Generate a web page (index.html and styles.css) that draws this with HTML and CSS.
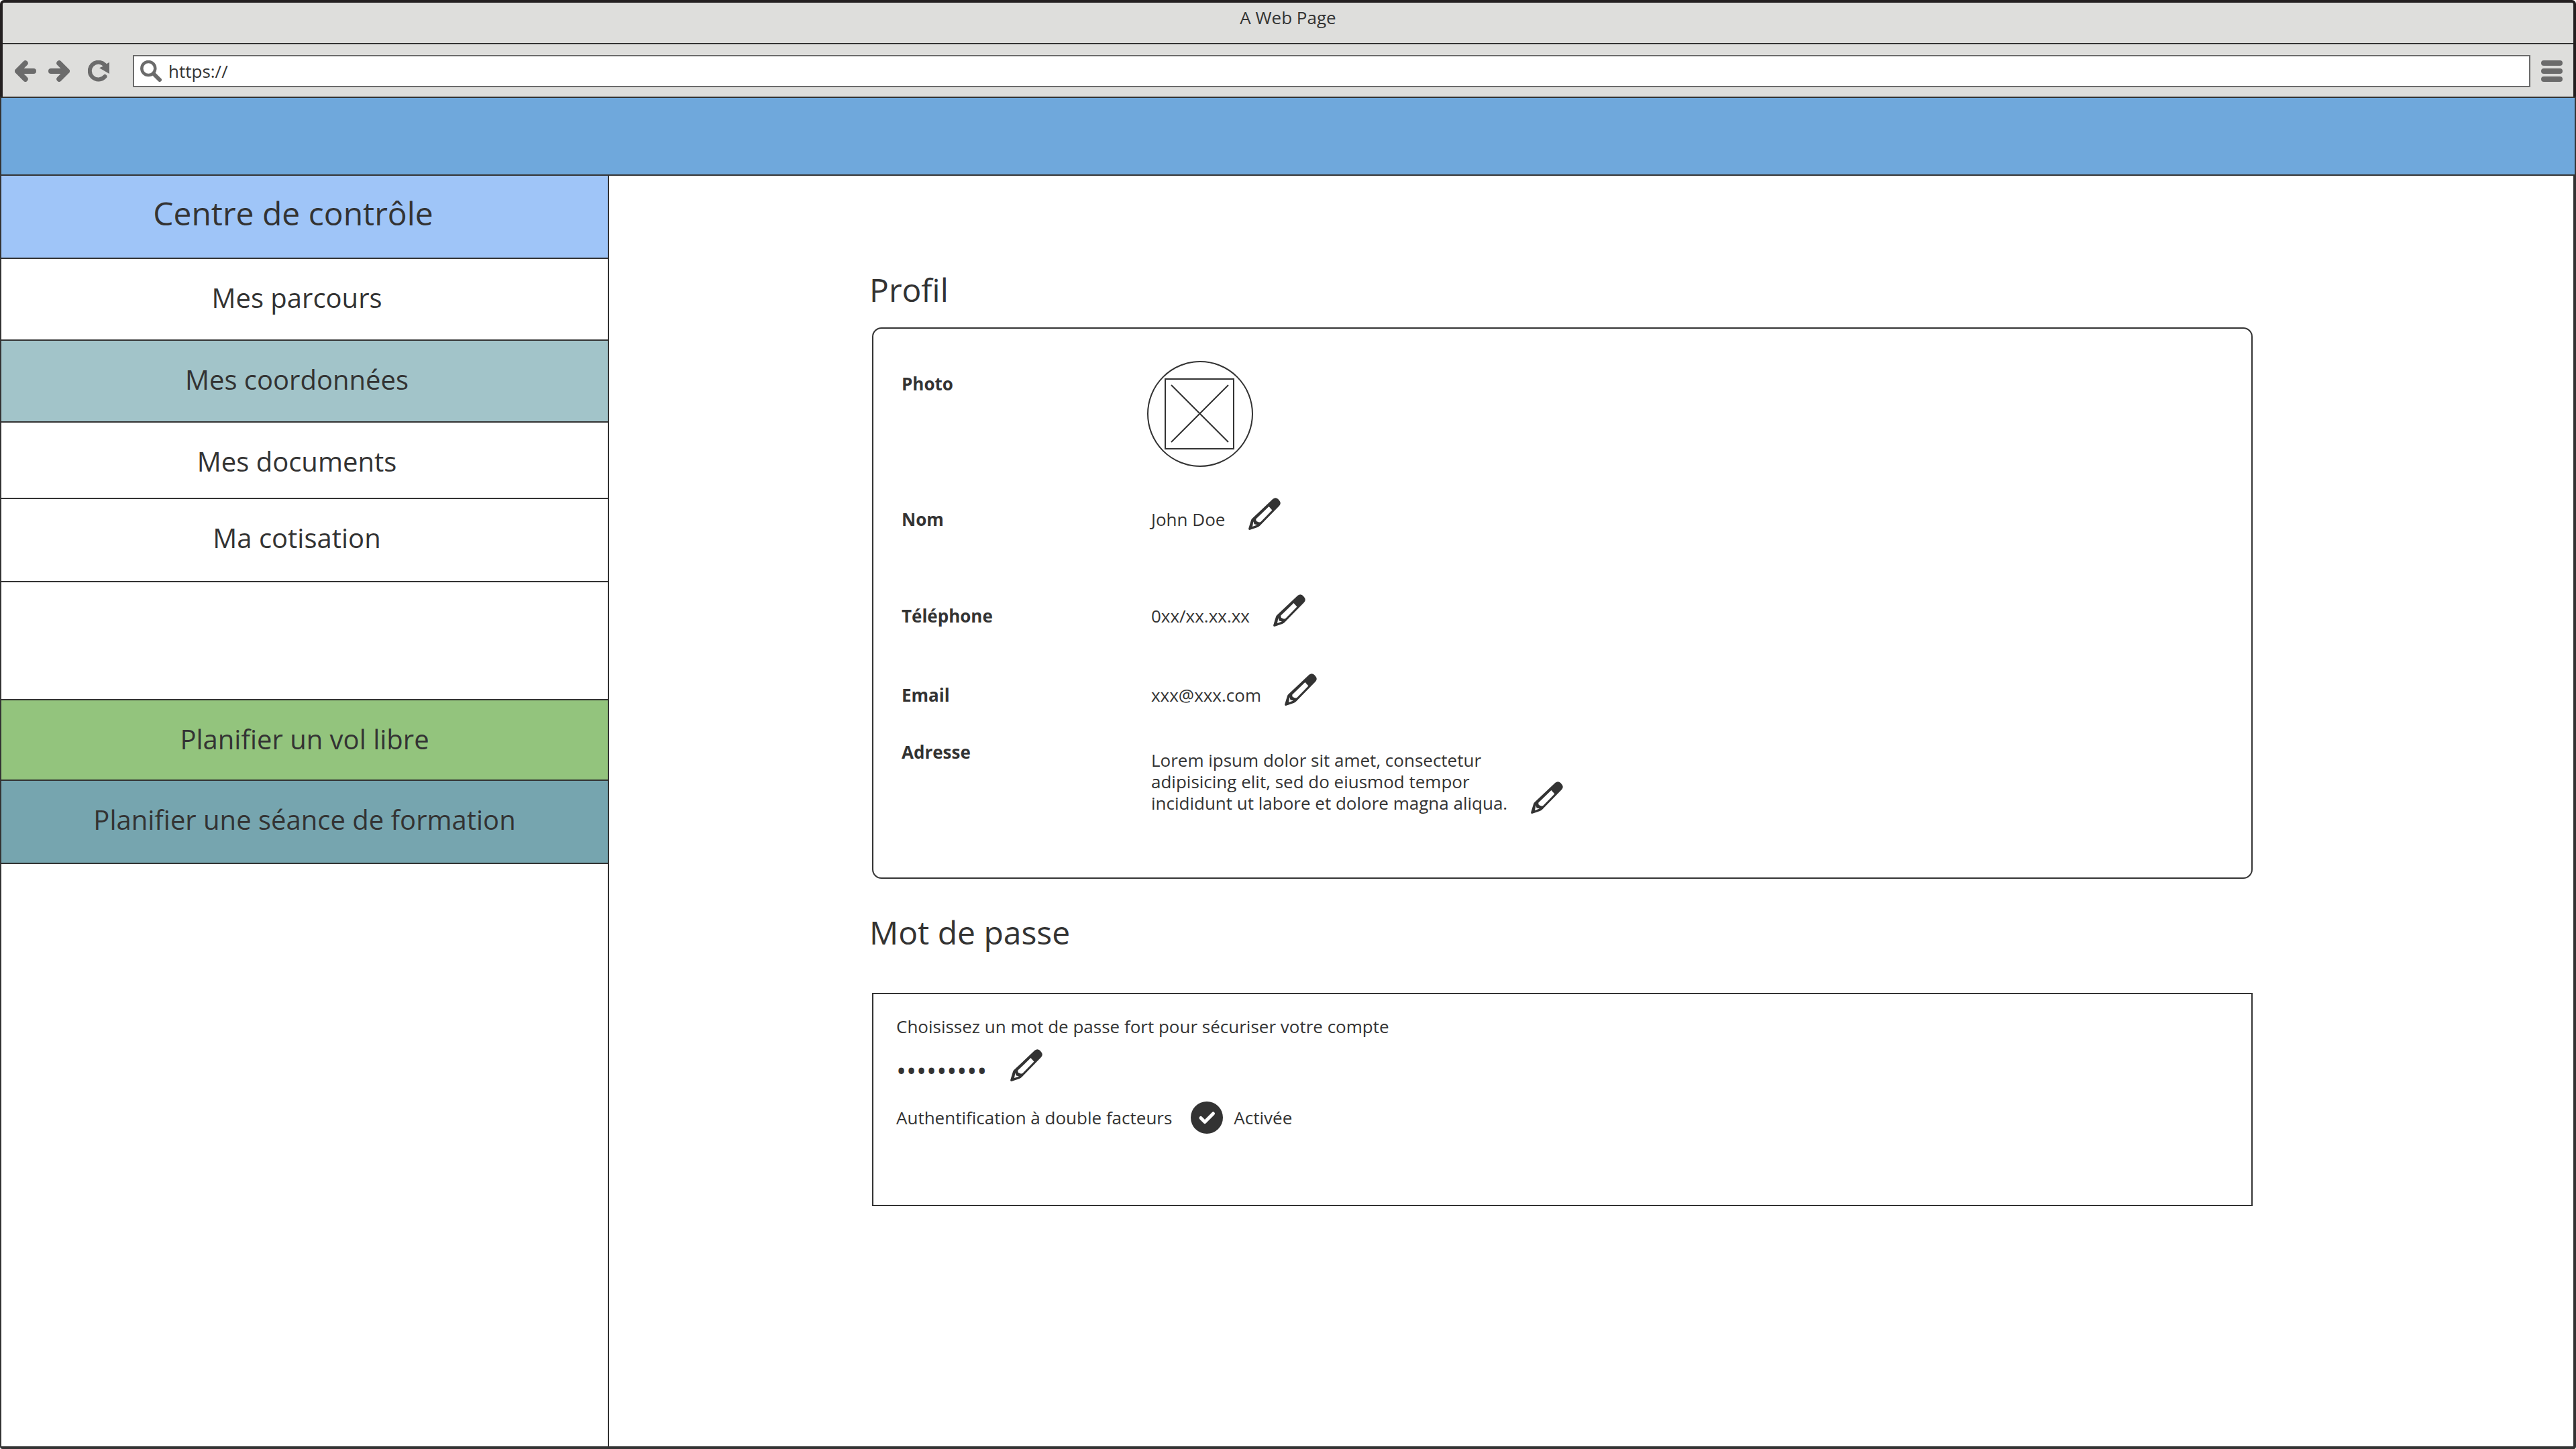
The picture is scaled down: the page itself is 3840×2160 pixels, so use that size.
FILE: index.html
```html
<!DOCTYPE html>
<html lang="fr">
<head>
  <meta charset="utf-8">
  <meta name="viewport" content="width=device-width, initial-scale=1">
  <title>A Web Page</title>
  <link rel="stylesheet" href="styles.css">
</head>
<body class="window">
  <svg class="sprite" aria-hidden="true">
    <symbol id="pencil" viewBox="0 0 48 48">
      <path fill="currentColor" fill-rule="evenodd" d="M36.500 1.800Q40.500-1.400 44 1.800L46 4Q49.500 8 46 12L17 41.800Q15.500 43.200 13.500 44L2.500 47.800Q-.4 48.400.3 45.500L3.800 34Q4.300 32 6 30.600ZM30.500 13L11.400 31.600Q11 33 12 35L15 36.200Q17.500 36.800 18.800 35.400L35.400 18.400ZM7.400 35.200L6 43L13 40.400L8.600 39.200Z"/>
    </symbol>
  </svg>

  <header class="chrome">
    <div class="chrome-title">A Web Page</div>
    <div class="toolbar">
      <div class="toolbar-nav">
        <button class="tool" type="button" aria-label="Précédent">
          <svg viewBox="0 0 32 32"><path d="M28 16H6M15.700 4.200L4 16L15.700 27.800" stroke-width="8"/></svg>
        </button>
        <button class="tool" type="button" aria-label="Suivant">
          <svg viewBox="0 0 32 32"><path d="M4 16H26M16.300 4.200L28 16L16.300 27.800" stroke-width="8"/></svg>
        </button>
        <button class="tool tool-reload" type="button" aria-label="Actualiser">
          <svg viewBox="0 0 32 32"><path d="M25.500 24A12.900 12.900 0 1 1 25 6.700" stroke-width="6"/><path class="solid" d="M32 2.700V20L17 11.300L21 9.500Z"/></svg>
        </button>
      </div>
      <label class="address">
        <svg class="address-icon" viewBox="0 0 32 32" aria-hidden="true"><circle cx="12.300" cy="12" r="10" stroke-width="4.500"/><path d="M20 20L29 29" stroke-width="6"/></svg>
        <input class="address-input" type="text" value="https://" aria-label="Adresse du site">
      </label>
      <button class="tool" type="button" aria-label="Menu">
        <svg viewBox="0 0 32 32"><path d="M4 4H28M4 16H28M4 28H28" stroke-width="8"/></svg>
      </button>
    </div>
  </header>

  <div class="banner"></div>

  <div class="layout">
    <nav class="sidebar">
      <a class="nav-item nav-title" href="#">Centre de contrôle</a>
      <a class="nav-item" href="#">Mes parcours</a>
      <a class="nav-item nav-current" href="#" aria-current="page">Mes coordonnées</a>
      <a class="nav-item" href="#">Mes documents</a>
      <a class="nav-item" href="#">Ma cotisation</a>
      <div class="nav-space"></div>
      <a class="nav-item nav-plan nav-flight" href="#">Planifier un vol libre</a>
      <a class="nav-item nav-plan nav-training" href="#">Planifier une séance de formation</a>
    </nav>

    <main class="content">
      <section class="section">
        <h2 class="heading">Profil</h2>
        <dl class="panel profile">
          <div class="field">
            <dt class="label label-photo">Photo</dt>
            <dd class="value">
              <svg class="avatar" viewBox="0 0 158 158" role="img" aria-label="Photo de profil"><circle cx="79" cy="79" r="78"/><path d="M27 27H129V131H27ZM36 36L121 121M121 36L36 121"/></svg>
            </dd>
          </div>
          <div class="field">
            <dt class="label label-row">Nom</dt>
            <dd class="value value-text"><span>John Doe</span>
              <button class="edit" type="button" aria-label="Modifier le nom"><svg><use href="#pencil"/></svg></button></dd>
          </div>
          <div class="field">
            <dt class="label label-row">Téléphone</dt>
            <dd class="value value-text"><span>0xx/xx.xx.xx</span>
              <button class="edit" type="button" aria-label="Modifier le téléphone"><svg><use href="#pencil"/></svg></button></dd>
          </div>
          <div class="field">
            <dt class="label label-row">Email</dt>
            <dd class="value value-text"><span>xxx@xxx.com</span>
              <button class="edit" type="button" aria-label="Modifier l’email"><svg><use href="#pencil"/></svg></button></dd>
          </div>
          <div class="field">
            <dt class="label">Adresse</dt>
            <dd class="value value-text value-address"><span>Lorem ipsum dolor sit amet, consectetur<br>adipisicing elit, sed do eiusmod tempor<br>incididunt ut labore et dolore magna aliqua.</span>
              <button class="edit" type="button" aria-label="Modifier l’adresse"><svg><use href="#pencil"/></svg></button></dd>
          </div>
        </dl>
      </section>

      <section class="section">
        <h2 class="heading heading-password">Mot de passe</h2>
        <div class="panel password">
          <label for="password">Choisissez un mot de passe fort pour sécuriser votre compte</label>
          <div class="password-row">
            <input class="password-input" id="password" type="password" value="motpasse1" readonly>
            <button class="edit" type="button" aria-label="Modifier le mot de passe"><svg><use href="#pencil"/></svg></button>
          </div>
          <div class="factor-row">
            <label for="factor">Authentification à double facteurs</label>
            <span class="check">
              <input class="check-input" id="factor" type="checkbox" checked>
              <svg class="check-mark" viewBox="0 0 48 48" aria-hidden="true"><path d="M15 24.500L21 30.500L33.500 18"/></svg>
            </span>
            <span class="factor-state">Activée</span>
          </div>
        </div>
      </section>
    </main>
  </div>
</body>
</html>
```
FILE: styles.css
```css
* {
  box-sizing: border-box;
}

.window {
  display: flex;
  flex-direction: column;
  min-height: 100vh;
  margin: 0;
  background: #fff;
  color: #333;
  font-family: "Open Sans", "Noto Sans", sans-serif;
  font-size: 26px;
  line-height: 32px;
}

.sprite {
  display: none;
}

button,
input {
  margin: 0;
  padding: 0;
  border: 0;
  background: none;
  color: inherit;
  font: inherit;
}

svg {
  display: block;
}

/* Browser frame */
.chrome {
  border: 4px solid #231f20;
  border-bottom: 0;
  border-radius: 6px 6px 0 0;
  background: #dededc;
}

.chrome-title {
  height: 62px;
  padding-top: 6px;
  border-bottom: 2px solid #333;
  text-align: center;
}

.toolbar {
  display: flex;
  align-items: center;
  gap: 16px;
  padding: 16px 16px 14px 18px;
}

.toolbar-nav {
  display: flex;
  gap: 18px;
  padding-right: 19px;
}

.tool {
  width: 32px;
  height: 32px;
}

.tool-reload {
  margin-left: 9px;
}

.tool svg,
.address-icon {
  width: 32px;
  height: 32px;
  fill: none;
  stroke: #6b6b6b;
  stroke-linecap: round;
  stroke-linejoin: round;
}

.tool .solid {
  fill: #6b6b6b;
  stroke: none;
}

.address {
  display: flex;
  flex: 1;
  align-items: center;
  gap: 10px;
  height: 48px;
  padding: 0 9px;
  border: 2px solid #6b6b6b;
  background: #fff;
}

.address-input {
  flex: 1;
  outline: 0;
}

.banner {
  height: 118px;
  border: 2px solid #333;
  background: #6fa8dc;
}

/* Page body */
.layout {
  display: flex;
  flex: 1;
  border: solid #333;
  border-width: 0 4px 4px 2px;
  border-radius: 0 0 4px 4px;
}

.sidebar {
  display: grid;
  flex: none;
  grid-template-rows: 124px 122px 122px 114px 124px 176px 120px 124px;
  align-content: start;
  width: 906px;
  border-right: 2px solid #333;
}

.nav-item {
  padding: 31px 23px 0 0;
  border-bottom: 2px solid #333;
  color: inherit;
  font-size: 40px;
  line-height: 54px;
  text-align: center;
  text-decoration: none;
}

.nav-title {
  padding: 24px 34px 0 0;
  background: #9fc5f8;
  font-size: 48px;
  line-height: 64px;
}

.nav-current {
  background: #a2c4c9;
}

.nav-space {
  border-bottom: 2px solid #333;
}

.nav-plan {
  padding-right: 0;
}

.nav-flight {
  background: #93c47d;
}

.nav-training {
  background: #76a5af;
}

.content {
  flex: 1;
  padding: 138px 478px 138px 388px;
}

.section + .section {
  margin-top: 48px;
}

.heading {
  margin: 0 0 24px;
  font-size: 48px;
  font-weight: 400;
  line-height: 64px;
}

.heading-password {
  margin-bottom: 58px;
}

.panel {
  margin: 0 0 0 4px;
  border: 2px solid #333;
}

/* Profile */
.profile {
  display: grid;
  grid-template-rows: 204px 144px 118px 101px auto;
  padding: 48px 42px 95px;
  border-radius: 14px;
}

.field {
  display: grid;
  grid-template-columns: 366px 1fr;
  align-items: start;
}

.label {
  font-weight: 700;
}

.label-photo {
  padding-top: 18px;
}

.label-row {
  padding-top: 16px;
}

.value {
  margin: 0;
}

.value-text {
  display: flex;
  align-items: flex-end;
  gap: 35px;
  padding-left: 6px;
}

.value-address {
  padding-top: 12px;
}

.avatar {
  width: 158px;
  height: 158px;
  fill: none;
  stroke: #333;
  stroke-width: 2px;
}

.edit,
.edit svg {
  width: 48px;
  height: 48px;
}

/* Password */
.password {
  display: flex;
  flex-direction: column;
  align-items: flex-start;
  padding: 32px 34px 106px;
}

.password-row {
  display: flex;
  align-items: center;
  gap: 34px;
  margin-top: 18px;
}

.password-input {
  width: 136px;
  height: 48px;
  padding-top: 14px;
  outline: 0;
  font-size: 40px;
}

.factor-row {
  display: flex;
  align-items: center;
  margin-top: 30px;
}

.check {
  display: grid;
  margin: 0 16px 0 28px;
}

.check-input,
.check-mark {
  grid-area: 1 / 1;
  width: 48px;
  height: 48px;
}

.check-input {
  border-radius: 50%;
  appearance: none;
}

.check-input:checked {
  background: #333;
}

.check-mark {
  fill: none;
  stroke: #fff;
  stroke-width: 5px;
  stroke-linecap: round;
  stroke-linejoin: round;
  pointer-events: none;
}
```
